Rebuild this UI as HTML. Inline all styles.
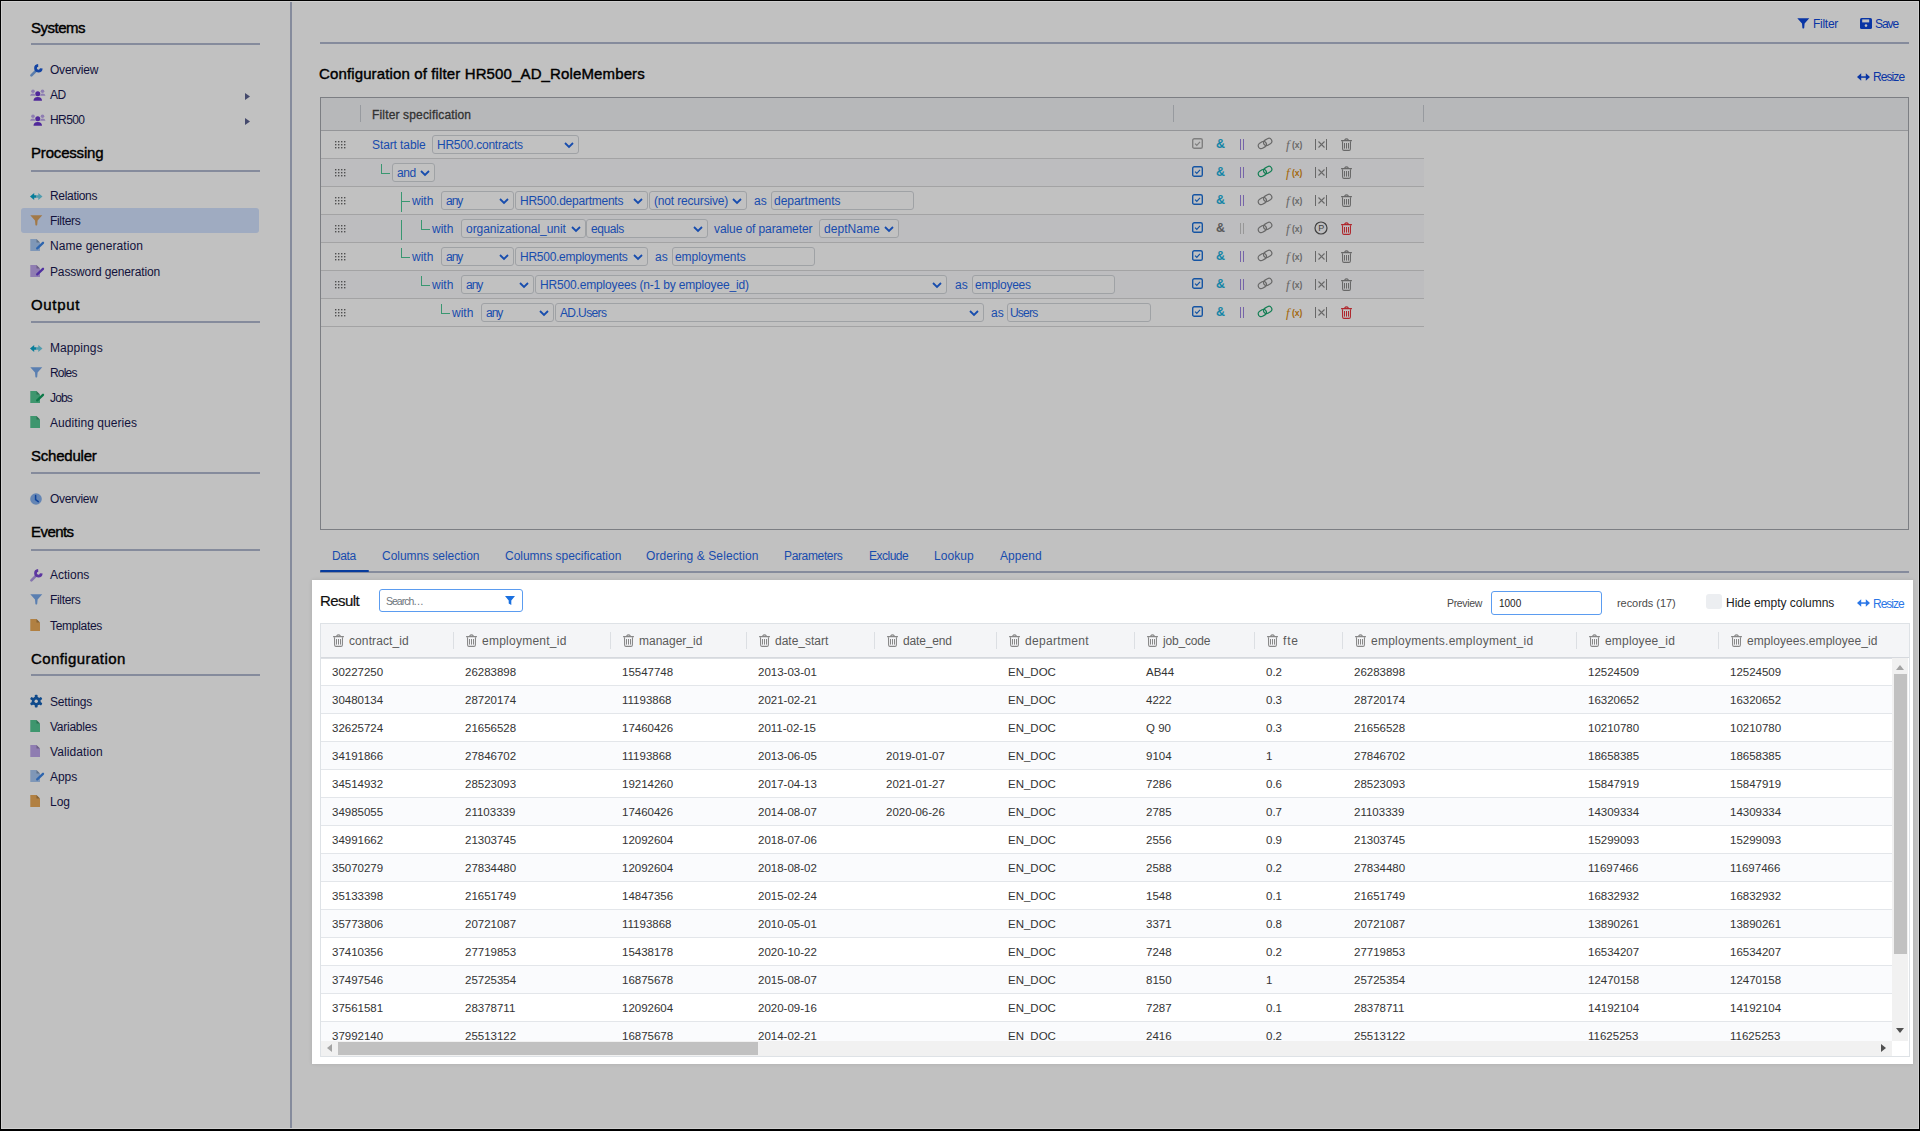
<!DOCTYPE html><html><head><meta charset="utf-8"><style>
html,body{margin:0;padding:0;width:1920px;height:1131px;overflow:hidden;background:#fff}
body{position:relative;font-family:'Liberation Sans', sans-serif}
.t{position:absolute;white-space:nowrap;line-height:1;font-family:'Liberation Sans', sans-serif}
svg{overflow:visible}
</style></head><body>
<div style="position:absolute;left:21px;top:208px;width:238px;height:25px;background:#d2e2ff;border-radius:3px"></div>
<div class="t" style="left:31px;top:20px;font-size:15px;color:#000;font-weight:normal;-webkit-text-stroke:0.4px #000;letter-spacing:-0.500px">Systems</div>
<div style="position:absolute;left:31px;top:43px;width:229px;height:2px;background:#b0b8cf"></div>
<div class="t" style="left:50px;top:64px;font-size:12px;color:#181850;font-weight:normal;;letter-spacing:-0.229px">Overview</div>
<svg style="position:absolute;left:30px;top:64px" width="13" height="13" viewBox="0 0 13 13"><path d="M1.4 11.4 L6.4 6.4" stroke="#78a6e4" stroke-width="2.6" stroke-linecap="round"/><path d="M11.3 4.4 A2.9 2.9 0 1 1 8.2 1.3" stroke="#1a5ad8" stroke-width="2.7" fill="none"/></svg>
<div class="t" style="left:50px;top:89px;font-size:12px;color:#181850;font-weight:normal;;letter-spacing:-0.400px">AD</div>
<svg style="position:absolute;left:30px;top:89px" width="16" height="13" viewBox="0 0 16 13"><circle cx="3" cy="2.2" r="1.8" fill="#bca6ec"/><circle cx="12.5" cy="2.2" r="1.8" fill="#bca6ec"/><path d="M0 6.8 Q0.5 4.6 3 4.6 Q5 4.6 5.5 6.8Z M15.5 6.8 Q15 4.6 12.5 4.6 Q10.5 4.6 10 6.8Z" fill="#bca6ec"/><circle cx="7.75" cy="4.8" r="2.5" fill="#6a36cc"/><path d="M3.5 11.8 Q3.5 8 7.75 8 Q12 8 12 11.8Z" fill="#6a36cc"/></svg>
<svg style="position:absolute;left:245px;top:93px" width="5" height="7" viewBox="0 0 5 7"><path d="M0 0 L5 3.5 L0 7Z" fill="#5c6290"/></svg>
<div class="t" style="left:50px;top:114px;font-size:12px;color:#181850;font-weight:normal;;letter-spacing:-0.600px">HR500</div>
<svg style="position:absolute;left:30px;top:114px" width="16" height="13" viewBox="0 0 16 13"><circle cx="3" cy="2.2" r="1.8" fill="#bca6ec"/><circle cx="12.5" cy="2.2" r="1.8" fill="#bca6ec"/><path d="M0 6.8 Q0.5 4.6 3 4.6 Q5 4.6 5.5 6.8Z M15.5 6.8 Q15 4.6 12.5 4.6 Q10.5 4.6 10 6.8Z" fill="#bca6ec"/><circle cx="7.75" cy="4.8" r="2.5" fill="#6a36cc"/><path d="M3.5 11.8 Q3.5 8 7.75 8 Q12 8 12 11.8Z" fill="#6a36cc"/></svg>
<svg style="position:absolute;left:245px;top:118px" width="5" height="7" viewBox="0 0 5 7"><path d="M0 0 L5 3.5 L0 7Z" fill="#5c6290"/></svg>
<div class="t" style="left:31px;top:145px;font-size:15px;color:#000;font-weight:normal;-webkit-text-stroke:0.4px #000;letter-spacing:-0.178px">Processing</div>
<div style="position:absolute;left:31px;top:170px;width:229px;height:2px;background:#b0b8cf"></div>
<div class="t" style="left:50px;top:190px;font-size:12px;color:#181850;font-weight:normal;;letter-spacing:-0.325px">Relations</div>
<svg style="position:absolute;left:30px;top:193px" width="13" height="8" viewBox="0 0 13 8"><path d="M0 3.5 L4.2 0 L4.2 2.3 L6.5 2.3 L6.5 4.7 L4.2 4.7 L4.2 7Z" fill="#0aa6cc"/><path d="M12.5 3.5 L8.3 0 L8.3 2.3 L6.5 2.3 L6.5 4.7 L8.3 4.7 L8.3 7Z" fill="#6ccfe6"/></svg>
<div class="t" style="left:50px;top:215px;font-size:12px;color:#181850;font-weight:normal;;letter-spacing:-0.333px">Filters</div>
<svg style="position:absolute;left:30px;top:215px" width="13" height="11" viewBox="0 0 13 11"><path d="M0.3 0.3 L12.3 0.3 L7.6 5.6 L7.2 10 Q6.3 11 5.4 10 L5 5.6Z" fill="#d7a060"/></svg>
<div class="t" style="left:50px;top:240px;font-size:12px;color:#181850;font-weight:normal;;letter-spacing:0.057px">Name generation</div>
<svg style="position:absolute;left:30px;top:239px" width="14" height="13" viewBox="0 0 14 13"><path d="M0.3 0 L6.5 0 L10 3.5 L10 12 L0.3 12Z" fill="#a8c8f2"/><path d="M6.5 0 L6.5 3.5 L10 3.5Z" fill="#000" opacity="0.25"/><path d="M7.2 9.4 L13 3.8" stroke="#3d86e6" stroke-width="2.3" stroke-linecap="round"/></svg>
<div class="t" style="left:50px;top:266px;font-size:12px;color:#181850;font-weight:normal;;letter-spacing:-0.144px">Password generation</div>
<svg style="position:absolute;left:30px;top:265px" width="14" height="13" viewBox="0 0 14 13"><path d="M0.3 0 L6.5 0 L10 3.5 L10 12 L0.3 12Z" fill="#bea6ea"/><path d="M6.5 0 L6.5 3.5 L10 3.5Z" fill="#000" opacity="0.25"/><path d="M7.2 9.4 L13 3.8" stroke="#6a40d4" stroke-width="2.3" stroke-linecap="round"/></svg>
<div class="t" style="left:31px;top:297px;font-size:15px;color:#000;font-weight:normal;-webkit-text-stroke:0.4px #000;letter-spacing:0.680px">Output</div>
<div style="position:absolute;left:31px;top:321px;width:229px;height:2px;background:#b0b8cf"></div>
<div class="t" style="left:50px;top:342px;font-size:12px;color:#181850;font-weight:normal;;letter-spacing:0.086px">Mappings</div>
<svg style="position:absolute;left:30px;top:345px" width="13" height="8" viewBox="0 0 13 8"><path d="M0 3.5 L4.2 0 L4.2 2.3 L6.5 2.3 L6.5 4.7 L4.2 4.7 L4.2 7Z" fill="#0aa6cc"/><path d="M12.5 3.5 L8.3 0 L8.3 2.3 L6.5 2.3 L6.5 4.7 L8.3 4.7 L8.3 7Z" fill="#6ccfe6"/></svg>
<div class="t" style="left:50px;top:367px;font-size:12px;color:#181850;font-weight:normal;;letter-spacing:-0.800px">Roles</div>
<svg style="position:absolute;left:30px;top:367px" width="13" height="11" viewBox="0 0 13 11"><path d="M0.3 0.3 L12.3 0.3 L7.6 5.6 L7.2 10 Q6.3 11 5.4 10 L5 5.6Z" fill="#78a8ea"/></svg>
<div class="t" style="left:50px;top:392px;font-size:12px;color:#181850;font-weight:normal;;letter-spacing:-0.867px">Jobs</div>
<svg style="position:absolute;left:30px;top:391px" width="14" height="13" viewBox="0 0 14 13"><path d="M0.3 0 L6.5 0 L10 3.5 L10 12 L0.3 12Z" fill="#52c692"/><path d="M6.5 0 L6.5 3.5 L10 3.5Z" fill="#000" opacity="0.25"/><path d="M7.2 9.4 L13 3.8" stroke="#12a060" stroke-width="2.3" stroke-linecap="round"/></svg>
<div class="t" style="left:50px;top:417px;font-size:12px;color:#181850;font-weight:normal;;letter-spacing:0.067px">Auditing queries</div>
<svg style="position:absolute;left:30px;top:416px" width="14" height="13" viewBox="0 0 14 13"><path d="M0.3 0 L6.5 0 L10 3.5 L10 12 L0.3 12Z" fill="#52c692"/><path d="M6.5 0 L6.5 3.5 L10 3.5Z" fill="#000" opacity="0.25"/></svg>
<div class="t" style="left:31px;top:448px;font-size:15px;color:#000;font-weight:normal;-webkit-text-stroke:0.4px #000;letter-spacing:-0.225px">Scheduler</div>
<div style="position:absolute;left:31px;top:472px;width:229px;height:2px;background:#b0b8cf"></div>
<div class="t" style="left:50px;top:493px;font-size:12px;color:#181850;font-weight:normal;;letter-spacing:-0.314px">Overview</div>
<svg style="position:absolute;left:30.299999999999997px;top:492.7px" width="12" height="12" viewBox="0 0 12 12"><circle cx="6" cy="6" r="5.8" fill="#84b0ee"/><path d="M5.6 2.4 L5.6 6.6 L8.3 8.6" stroke="#1258cc" stroke-width="1.5" fill="none" stroke-linecap="round"/></svg>
<div class="t" style="left:31px;top:524px;font-size:15px;color:#000;font-weight:normal;-webkit-text-stroke:0.4px #000;letter-spacing:-0.560px">Events</div>
<div style="position:absolute;left:31px;top:549px;width:229px;height:2px;background:#b0b8cf"></div>
<div class="t" style="left:50px;top:569px;font-size:12px;color:#181850;font-weight:normal;;letter-spacing:0.000px">Actions</div>
<svg style="position:absolute;left:30px;top:569px" width="13" height="13" viewBox="0 0 13 13"><path d="M1.4 11.4 L6.4 6.4" stroke="#b09ae6" stroke-width="2.6" stroke-linecap="round"/><path d="M11.3 4.4 A2.9 2.9 0 1 1 8.2 1.3" stroke="#7a48d4" stroke-width="2.7" fill="none"/></svg>
<div class="t" style="left:50px;top:594px;font-size:12px;color:#181850;font-weight:normal;;letter-spacing:-0.333px">Filters</div>
<svg style="position:absolute;left:30px;top:594px" width="13" height="11" viewBox="0 0 13 11"><path d="M0.3 0.3 L12.3 0.3 L7.6 5.6 L7.2 10 Q6.3 11 5.4 10 L5 5.6Z" fill="#78a8ea"/></svg>
<div class="t" style="left:50px;top:620px;font-size:12px;color:#181850;font-weight:normal;;letter-spacing:-0.300px">Templates</div>
<svg style="position:absolute;left:30px;top:619px" width="14" height="13" viewBox="0 0 14 13"><path d="M0.3 0 L6.5 0 L10 3.5 L10 12 L0.3 12Z" fill="#eaaa58"/><path d="M6.5 0 L6.5 3.5 L10 3.5Z" fill="#000" opacity="0.25"/></svg>
<div class="t" style="left:31px;top:651px;font-size:15px;color:#000;font-weight:normal;-webkit-text-stroke:0.4px #000;letter-spacing:0.417px">Configuration</div>
<div style="position:absolute;left:31px;top:674px;width:229px;height:2px;background:#b0b8cf"></div>
<div class="t" style="left:50px;top:696px;font-size:12px;color:#181850;font-weight:normal;;letter-spacing:-0.171px">Settings</div>
<svg style="position:absolute;left:30.099999999999998px;top:695.0999999999999px" width="13" height="13" viewBox="0 0 13 13"><rect x="4.8" y="-0.2" width="2.8" height="12.8" rx="0.8" fill="#1662b8" transform="rotate(0 6.2 6.2)"/><rect x="4.8" y="-0.2" width="2.8" height="12.8" rx="0.8" fill="#1662b8" transform="rotate(60 6.2 6.2)"/><rect x="4.8" y="-0.2" width="2.8" height="12.8" rx="0.8" fill="#1662b8" transform="rotate(120 6.2 6.2)"/><circle cx="6.2" cy="6.2" r="4.4" fill="#1662b8"/><circle cx="6.2" cy="6.2" r="1.7" fill="#fff"/></svg>
<div class="t" style="left:50px;top:721px;font-size:12px;color:#181850;font-weight:normal;;letter-spacing:-0.250px">Variables</div>
<svg style="position:absolute;left:30px;top:720px" width="14" height="13" viewBox="0 0 14 13"><path d="M0.3 0 L6.5 0 L10 3.5 L10 12 L0.3 12Z" fill="#52c692"/><path d="M6.5 0 L6.5 3.5 L10 3.5Z" fill="#000" opacity="0.25"/></svg>
<div class="t" style="left:50px;top:746px;font-size:12px;color:#181850;font-weight:normal;;letter-spacing:0.089px">Validation</div>
<svg style="position:absolute;left:30px;top:745px" width="14" height="13" viewBox="0 0 14 13"><path d="M0.3 0 L6.5 0 L10 3.5 L10 12 L0.3 12Z" fill="#bea6ea"/><path d="M6.5 0 L6.5 3.5 L10 3.5Z" fill="#000" opacity="0.25"/></svg>
<div class="t" style="left:50px;top:771px;font-size:12px;color:#181850;font-weight:normal;;letter-spacing:-0.067px">Apps</div>
<svg style="position:absolute;left:30px;top:770px" width="14" height="13" viewBox="0 0 14 13"><path d="M0.3 0 L6.5 0 L10 3.5 L10 12 L0.3 12Z" fill="#a8c8f2"/><path d="M6.5 0 L6.5 3.5 L10 3.5Z" fill="#000" opacity="0.25"/><path d="M7.2 9.4 L13 3.8" stroke="#3d86e6" stroke-width="2.3" stroke-linecap="round"/></svg>
<div class="t" style="left:50px;top:796px;font-size:12px;color:#181850;font-weight:normal;;letter-spacing:0.000px">Log</div>
<svg style="position:absolute;left:30px;top:795px" width="14" height="13" viewBox="0 0 14 13"><path d="M0.3 0 L6.5 0 L10 3.5 L10 12 L0.3 12Z" fill="#eaaa58"/><path d="M6.5 0 L6.5 3.5 L10 3.5Z" fill="#000" opacity="0.25"/></svg>
<div style="position:absolute;left:290px;top:0px;width:2px;height:1131px;background:#b0b8cf"></div>
<svg style="position:absolute;left:1797px;top:18px" width="13" height="11" viewBox="0 0 13 11"><path d="M0.3 0.3 L12.3 0.3 L7.6 5.6 L7.2 10 Q6.3 11 5.4 10 L5 5.6Z" fill="#0c46da"/></svg>
<div class="t" style="left:1813px;top:18px;font-size:12px;color:#0c46da;font-weight:normal;;letter-spacing:-0.280px">Filter</div>
<svg style="position:absolute;left:1860px;top:18px" width="12" height="11" viewBox="0 0 12 11"><rect x="0" y="0" width="12" height="11" rx="1.6" fill="#0c46da"/><rect x="2.2" y="1.4" width="7" height="3" fill="#fff"/><circle cx="6" cy="7.6" r="1.3" fill="#fff"/></svg>
<div class="t" style="left:1875px;top:18px;font-size:12px;color:#0c46da;font-weight:normal;;letter-spacing:-1.067px">Save</div>
<div style="position:absolute;left:320px;top:42px;width:1589px;height:2px;background:#b0b8cf"></div>
<div class="t" style="left:319px;top:66px;font-size:15px;color:#000;font-weight:normal;-webkit-text-stroke:0.4px #000;letter-spacing:0.130px">Configuration of filter HR500_AD_RoleMembers</div>
<svg style="position:absolute;left:1857px;top:73px" width="13" height="8" viewBox="0 0 13 8"><path d="M0 4 L4.2 0.2 L4.2 7.8Z M13 4 L8.8 0.2 L8.8 7.8Z" fill="#0c46da"/><rect x="3.5" y="3.3" width="6" height="1.5" fill="#0c46da"/></svg>
<div class="t" style="left:1873px;top:71px;font-size:12px;color:#0c46da;font-weight:normal;;letter-spacing:-0.920px">Resize</div>
<div style="position:absolute;left:320px;top:97px;width:1589px;height:433px;border:1px solid #a4a7ad;box-sizing:border-box;background:#fff"></div>
<div style="position:absolute;left:321px;top:98px;width:1587px;height:32px;background:#f2f3f6"></div>
<div style="position:absolute;left:321px;top:130px;width:1587px;height:1px;background:#c4c5c9"></div>
<div style="position:absolute;left:360px;top:105px;width:1px;height:17px;background:#c8ccd2"></div>
<div style="position:absolute;left:1173px;top:105px;width:1px;height:17px;background:#c8ccd2"></div>
<div style="position:absolute;left:1423px;top:105px;width:1px;height:17px;background:#c8ccd2"></div>
<div class="t" style="left:372px;top:109px;font-size:12px;color:#444;font-weight:normal;-webkit-text-stroke:0.3px #444;letter-spacing:0.158px">Filter specification</div>
<div style="position:absolute;left:321px;top:131px;width:1103px;height:27px;background:#ffffff"></div>
<div style="position:absolute;left:321px;top:158px;width:1103px;height:1px;background:#d8d8d9"></div>
<svg style="position:absolute;left:335px;top:141px" width="11" height="8" viewBox="0 0 11 8"><rect x="0" y="0" width="1.4" height="1.4" fill="#6a6a6a"/><rect x="0" y="3" width="1.4" height="1.4" fill="#6a6a6a"/><rect x="0" y="6" width="1.4" height="1.4" fill="#6a6a6a"/><rect x="3" y="0" width="1.4" height="1.4" fill="#6a6a6a"/><rect x="3" y="3" width="1.4" height="1.4" fill="#6a6a6a"/><rect x="3" y="6" width="1.4" height="1.4" fill="#6a6a6a"/><rect x="6" y="0" width="1.4" height="1.4" fill="#6a6a6a"/><rect x="6" y="3" width="1.4" height="1.4" fill="#6a6a6a"/><rect x="6" y="6" width="1.4" height="1.4" fill="#6a6a6a"/><rect x="9" y="0" width="1.4" height="1.4" fill="#6a6a6a"/><rect x="9" y="3" width="1.4" height="1.4" fill="#6a6a6a"/><rect x="9" y="6" width="1.4" height="1.4" fill="#6a6a6a"/></svg>
<div style="position:absolute;left:321px;top:159px;width:1103px;height:27px;background:#fafafd"></div>
<div style="position:absolute;left:321px;top:186px;width:1103px;height:1px;background:#d8d8d9"></div>
<svg style="position:absolute;left:335px;top:169px" width="11" height="8" viewBox="0 0 11 8"><rect x="0" y="0" width="1.4" height="1.4" fill="#6a6a6a"/><rect x="0" y="3" width="1.4" height="1.4" fill="#6a6a6a"/><rect x="0" y="6" width="1.4" height="1.4" fill="#6a6a6a"/><rect x="3" y="0" width="1.4" height="1.4" fill="#6a6a6a"/><rect x="3" y="3" width="1.4" height="1.4" fill="#6a6a6a"/><rect x="3" y="6" width="1.4" height="1.4" fill="#6a6a6a"/><rect x="6" y="0" width="1.4" height="1.4" fill="#6a6a6a"/><rect x="6" y="3" width="1.4" height="1.4" fill="#6a6a6a"/><rect x="6" y="6" width="1.4" height="1.4" fill="#6a6a6a"/><rect x="9" y="0" width="1.4" height="1.4" fill="#6a6a6a"/><rect x="9" y="3" width="1.4" height="1.4" fill="#6a6a6a"/><rect x="9" y="6" width="1.4" height="1.4" fill="#6a6a6a"/></svg>
<div style="position:absolute;left:321px;top:187px;width:1103px;height:27px;background:#ffffff"></div>
<div style="position:absolute;left:321px;top:214px;width:1103px;height:1px;background:#d8d8d9"></div>
<svg style="position:absolute;left:335px;top:197px" width="11" height="8" viewBox="0 0 11 8"><rect x="0" y="0" width="1.4" height="1.4" fill="#6a6a6a"/><rect x="0" y="3" width="1.4" height="1.4" fill="#6a6a6a"/><rect x="0" y="6" width="1.4" height="1.4" fill="#6a6a6a"/><rect x="3" y="0" width="1.4" height="1.4" fill="#6a6a6a"/><rect x="3" y="3" width="1.4" height="1.4" fill="#6a6a6a"/><rect x="3" y="6" width="1.4" height="1.4" fill="#6a6a6a"/><rect x="6" y="0" width="1.4" height="1.4" fill="#6a6a6a"/><rect x="6" y="3" width="1.4" height="1.4" fill="#6a6a6a"/><rect x="6" y="6" width="1.4" height="1.4" fill="#6a6a6a"/><rect x="9" y="0" width="1.4" height="1.4" fill="#6a6a6a"/><rect x="9" y="3" width="1.4" height="1.4" fill="#6a6a6a"/><rect x="9" y="6" width="1.4" height="1.4" fill="#6a6a6a"/></svg>
<div style="position:absolute;left:321px;top:215px;width:1103px;height:27px;background:#fafafd"></div>
<div style="position:absolute;left:321px;top:242px;width:1103px;height:1px;background:#d8d8d9"></div>
<svg style="position:absolute;left:335px;top:225px" width="11" height="8" viewBox="0 0 11 8"><rect x="0" y="0" width="1.4" height="1.4" fill="#6a6a6a"/><rect x="0" y="3" width="1.4" height="1.4" fill="#6a6a6a"/><rect x="0" y="6" width="1.4" height="1.4" fill="#6a6a6a"/><rect x="3" y="0" width="1.4" height="1.4" fill="#6a6a6a"/><rect x="3" y="3" width="1.4" height="1.4" fill="#6a6a6a"/><rect x="3" y="6" width="1.4" height="1.4" fill="#6a6a6a"/><rect x="6" y="0" width="1.4" height="1.4" fill="#6a6a6a"/><rect x="6" y="3" width="1.4" height="1.4" fill="#6a6a6a"/><rect x="6" y="6" width="1.4" height="1.4" fill="#6a6a6a"/><rect x="9" y="0" width="1.4" height="1.4" fill="#6a6a6a"/><rect x="9" y="3" width="1.4" height="1.4" fill="#6a6a6a"/><rect x="9" y="6" width="1.4" height="1.4" fill="#6a6a6a"/></svg>
<div style="position:absolute;left:321px;top:243px;width:1103px;height:27px;background:#ffffff"></div>
<div style="position:absolute;left:321px;top:270px;width:1103px;height:1px;background:#d8d8d9"></div>
<svg style="position:absolute;left:335px;top:253px" width="11" height="8" viewBox="0 0 11 8"><rect x="0" y="0" width="1.4" height="1.4" fill="#6a6a6a"/><rect x="0" y="3" width="1.4" height="1.4" fill="#6a6a6a"/><rect x="0" y="6" width="1.4" height="1.4" fill="#6a6a6a"/><rect x="3" y="0" width="1.4" height="1.4" fill="#6a6a6a"/><rect x="3" y="3" width="1.4" height="1.4" fill="#6a6a6a"/><rect x="3" y="6" width="1.4" height="1.4" fill="#6a6a6a"/><rect x="6" y="0" width="1.4" height="1.4" fill="#6a6a6a"/><rect x="6" y="3" width="1.4" height="1.4" fill="#6a6a6a"/><rect x="6" y="6" width="1.4" height="1.4" fill="#6a6a6a"/><rect x="9" y="0" width="1.4" height="1.4" fill="#6a6a6a"/><rect x="9" y="3" width="1.4" height="1.4" fill="#6a6a6a"/><rect x="9" y="6" width="1.4" height="1.4" fill="#6a6a6a"/></svg>
<div style="position:absolute;left:321px;top:271px;width:1103px;height:27px;background:#fafafd"></div>
<div style="position:absolute;left:321px;top:298px;width:1103px;height:1px;background:#d8d8d9"></div>
<svg style="position:absolute;left:335px;top:281px" width="11" height="8" viewBox="0 0 11 8"><rect x="0" y="0" width="1.4" height="1.4" fill="#6a6a6a"/><rect x="0" y="3" width="1.4" height="1.4" fill="#6a6a6a"/><rect x="0" y="6" width="1.4" height="1.4" fill="#6a6a6a"/><rect x="3" y="0" width="1.4" height="1.4" fill="#6a6a6a"/><rect x="3" y="3" width="1.4" height="1.4" fill="#6a6a6a"/><rect x="3" y="6" width="1.4" height="1.4" fill="#6a6a6a"/><rect x="6" y="0" width="1.4" height="1.4" fill="#6a6a6a"/><rect x="6" y="3" width="1.4" height="1.4" fill="#6a6a6a"/><rect x="6" y="6" width="1.4" height="1.4" fill="#6a6a6a"/><rect x="9" y="0" width="1.4" height="1.4" fill="#6a6a6a"/><rect x="9" y="3" width="1.4" height="1.4" fill="#6a6a6a"/><rect x="9" y="6" width="1.4" height="1.4" fill="#6a6a6a"/></svg>
<div style="position:absolute;left:321px;top:299px;width:1103px;height:27px;background:#ffffff"></div>
<div style="position:absolute;left:321px;top:326px;width:1103px;height:1px;background:#d8d8d9"></div>
<svg style="position:absolute;left:335px;top:309px" width="11" height="8" viewBox="0 0 11 8"><rect x="0" y="0" width="1.4" height="1.4" fill="#6a6a6a"/><rect x="0" y="3" width="1.4" height="1.4" fill="#6a6a6a"/><rect x="0" y="6" width="1.4" height="1.4" fill="#6a6a6a"/><rect x="3" y="0" width="1.4" height="1.4" fill="#6a6a6a"/><rect x="3" y="3" width="1.4" height="1.4" fill="#6a6a6a"/><rect x="3" y="6" width="1.4" height="1.4" fill="#6a6a6a"/><rect x="6" y="0" width="1.4" height="1.4" fill="#6a6a6a"/><rect x="6" y="3" width="1.4" height="1.4" fill="#6a6a6a"/><rect x="6" y="6" width="1.4" height="1.4" fill="#6a6a6a"/><rect x="9" y="0" width="1.4" height="1.4" fill="#6a6a6a"/><rect x="9" y="3" width="1.4" height="1.4" fill="#6a6a6a"/><rect x="9" y="6" width="1.4" height="1.4" fill="#6a6a6a"/></svg>
<div class="t" style="left:372px;top:139px;font-size:12px;color:#1f66e6;font-weight:normal;;letter-spacing:-0.100px">Start table</div>
<div style="position:absolute;left:432px;top:135px;width:147px;height:19px;border:1px solid #d3d6db;border-radius:3px;box-sizing:border-box;background:#fff"></div>
<div class="t" style="left:437px;top:139px;font-size:12px;color:#1f66e6;font-weight:normal;;letter-spacing:-0.243px">HR500.contracts</div>
<svg style="position:absolute;left:564px;top:142px" width="10" height="7" viewBox="0 0 10 7"><path d="M1 1 L5 5 L9 1" stroke="#1f66e6" stroke-width="1.8" fill="none"/></svg>
<div style="position:absolute;left:381px;top:164px;width:1px;height:10px;background:#4cc896"></div>
<div style="position:absolute;left:381px;top:173px;width:9px;height:1px;background:#4cc896"></div>
<div style="position:absolute;left:392px;top:163px;width:43px;height:19px;border:1px solid #d3d6db;border-radius:3px;box-sizing:border-box;background:#fff"></div>
<div class="t" style="left:397px;top:167px;font-size:12px;color:#1f66e6;font-weight:normal;;letter-spacing:-0.400px">and</div>
<svg style="position:absolute;left:420px;top:170px" width="10" height="7" viewBox="0 0 10 7"><path d="M1 1 L5 5 L9 1" stroke="#1f66e6" stroke-width="1.8" fill="none"/></svg>
<div style="position:absolute;left:401px;top:192px;width:1px;height:20px;background:#4cc896"></div>
<div style="position:absolute;left:401px;top:201px;width:9px;height:1px;background:#4cc896"></div>
<div class="t" style="left:412px;top:195px;font-size:12px;color:#1f66e6;font-weight:normal;">with</div>
<div style="position:absolute;left:441px;top:191px;width:73px;height:19px;border:1px solid #d3d6db;border-radius:3px;box-sizing:border-box;background:#fff"></div>
<div class="t" style="left:446px;top:195px;font-size:12px;color:#1f66e6;font-weight:normal;;letter-spacing:-1.000px">any</div>
<svg style="position:absolute;left:499px;top:198px" width="10" height="7" viewBox="0 0 10 7"><path d="M1 1 L5 5 L9 1" stroke="#1f66e6" stroke-width="1.8" fill="none"/></svg>
<div style="position:absolute;left:515px;top:191px;width:133px;height:19px;border:1px solid #d3d6db;border-radius:3px;box-sizing:border-box;background:#fff"></div>
<div class="t" style="left:520px;top:195px;font-size:12px;color:#1f66e6;font-weight:normal;;letter-spacing:-0.250px">HR500.departments</div>
<svg style="position:absolute;left:633px;top:198px" width="10" height="7" viewBox="0 0 10 7"><path d="M1 1 L5 5 L9 1" stroke="#1f66e6" stroke-width="1.8" fill="none"/></svg>
<div style="position:absolute;left:649px;top:191px;width:98px;height:19px;border:1px solid #d3d6db;border-radius:3px;box-sizing:border-box;background:#fff"></div>
<div class="t" style="left:654px;top:195px;font-size:12px;color:#1f66e6;font-weight:normal;;letter-spacing:-0.171px">(not recursive)</div>
<svg style="position:absolute;left:732px;top:198px" width="10" height="7" viewBox="0 0 10 7"><path d="M1 1 L5 5 L9 1" stroke="#1f66e6" stroke-width="1.8" fill="none"/></svg>
<div class="t" style="left:754px;top:195px;font-size:12px;color:#1f66e6;font-weight:normal;">as</div>
<div style="position:absolute;left:771px;top:191px;width:143px;height:19px;border:1px solid #d3d6db;border-radius:3px;box-sizing:border-box;background:#fff"></div>
<div class="t" style="left:774px;top:195px;font-size:12px;color:#1f66e6;font-weight:normal;;letter-spacing:-0.020px">departments</div>
<div style="position:absolute;left:401px;top:220px;width:1px;height:20px;background:#4cc896"></div>
<div style="position:absolute;left:421px;top:220px;width:1px;height:10px;background:#4cc896"></div>
<div style="position:absolute;left:421px;top:229px;width:9px;height:1px;background:#4cc896"></div>
<div class="t" style="left:432px;top:223px;font-size:12px;color:#1f66e6;font-weight:normal;">with</div>
<div style="position:absolute;left:461px;top:219px;width:125px;height:19px;border:1px solid #d3d6db;border-radius:3px;box-sizing:border-box;background:#fff"></div>
<div class="t" style="left:466px;top:223px;font-size:12px;color:#1f66e6;font-weight:normal;;letter-spacing:-0.044px">organizational_unit</div>
<svg style="position:absolute;left:571px;top:226px" width="10" height="7" viewBox="0 0 10 7"><path d="M1 1 L5 5 L9 1" stroke="#1f66e6" stroke-width="1.8" fill="none"/></svg>
<div style="position:absolute;left:586px;top:219px;width:122px;height:19px;border:1px solid #d3d6db;border-radius:3px;box-sizing:border-box;background:#fff"></div>
<div class="t" style="left:591px;top:223px;font-size:12px;color:#1f66e6;font-weight:normal;;letter-spacing:-0.400px">equals</div>
<svg style="position:absolute;left:693px;top:226px" width="10" height="7" viewBox="0 0 10 7"><path d="M1 1 L5 5 L9 1" stroke="#1f66e6" stroke-width="1.8" fill="none"/></svg>
<div class="t" style="left:714px;top:223px;font-size:12px;color:#1f66e6;font-weight:normal;;letter-spacing:-0.094px">value of parameter</div>
<div style="position:absolute;left:819px;top:219px;width:80px;height:19px;border:1px solid #d3d6db;border-radius:3px;box-sizing:border-box;background:#fff"></div>
<div class="t" style="left:824px;top:223px;font-size:12px;color:#1f66e6;font-weight:normal;;letter-spacing:0.057px">deptName</div>
<svg style="position:absolute;left:884px;top:226px" width="10" height="7" viewBox="0 0 10 7"><path d="M1 1 L5 5 L9 1" stroke="#1f66e6" stroke-width="1.8" fill="none"/></svg>
<div style="position:absolute;left:401px;top:248px;width:1px;height:10px;background:#4cc896"></div>
<div style="position:absolute;left:401px;top:257px;width:9px;height:1px;background:#4cc896"></div>
<div class="t" style="left:412px;top:251px;font-size:12px;color:#1f66e6;font-weight:normal;">with</div>
<div style="position:absolute;left:441px;top:247px;width:73px;height:19px;border:1px solid #d3d6db;border-radius:3px;box-sizing:border-box;background:#fff"></div>
<div class="t" style="left:446px;top:251px;font-size:12px;color:#1f66e6;font-weight:normal;;letter-spacing:-1.000px">any</div>
<svg style="position:absolute;left:499px;top:254px" width="10" height="7" viewBox="0 0 10 7"><path d="M1 1 L5 5 L9 1" stroke="#1f66e6" stroke-width="1.8" fill="none"/></svg>
<div style="position:absolute;left:515px;top:247px;width:133px;height:19px;border:1px solid #d3d6db;border-radius:3px;box-sizing:border-box;background:#fff"></div>
<div class="t" style="left:520px;top:251px;font-size:12px;color:#1f66e6;font-weight:normal;;letter-spacing:-0.263px">HR500.employments</div>
<svg style="position:absolute;left:633px;top:254px" width="10" height="7" viewBox="0 0 10 7"><path d="M1 1 L5 5 L9 1" stroke="#1f66e6" stroke-width="1.8" fill="none"/></svg>
<div class="t" style="left:655px;top:251px;font-size:12px;color:#1f66e6;font-weight:normal;">as</div>
<div style="position:absolute;left:672px;top:247px;width:143px;height:19px;border:1px solid #d3d6db;border-radius:3px;box-sizing:border-box;background:#fff"></div>
<div class="t" style="left:675px;top:251px;font-size:12px;color:#1f66e6;font-weight:normal;;letter-spacing:-0.060px">employments</div>
<div style="position:absolute;left:421px;top:276px;width:1px;height:10px;background:#4cc896"></div>
<div style="position:absolute;left:421px;top:285px;width:9px;height:1px;background:#4cc896"></div>
<div class="t" style="left:432px;top:279px;font-size:12px;color:#1f66e6;font-weight:normal;">with</div>
<div style="position:absolute;left:461px;top:275px;width:73px;height:19px;border:1px solid #d3d6db;border-radius:3px;box-sizing:border-box;background:#fff"></div>
<div class="t" style="left:466px;top:279px;font-size:12px;color:#1f66e6;font-weight:normal;;letter-spacing:-1.000px">any</div>
<svg style="position:absolute;left:519px;top:282px" width="10" height="7" viewBox="0 0 10 7"><path d="M1 1 L5 5 L9 1" stroke="#1f66e6" stroke-width="1.8" fill="none"/></svg>
<div style="position:absolute;left:535px;top:275px;width:412px;height:19px;border:1px solid #d3d6db;border-radius:3px;box-sizing:border-box;background:#fff"></div>
<div class="t" style="left:540px;top:279px;font-size:12px;color:#1f66e6;font-weight:normal;;letter-spacing:-0.166px">HR500.employees (n-1 by employee_id)</div>
<svg style="position:absolute;left:932px;top:282px" width="10" height="7" viewBox="0 0 10 7"><path d="M1 1 L5 5 L9 1" stroke="#1f66e6" stroke-width="1.8" fill="none"/></svg>
<div class="t" style="left:955px;top:279px;font-size:12px;color:#1f66e6;font-weight:normal;">as</div>
<div style="position:absolute;left:972px;top:275px;width:143px;height:19px;border:1px solid #d3d6db;border-radius:3px;box-sizing:border-box;background:#fff"></div>
<div class="t" style="left:975px;top:279px;font-size:12px;color:#1f66e6;font-weight:normal;;letter-spacing:-0.250px">employees</div>
<div style="position:absolute;left:441px;top:304px;width:1px;height:10px;background:#4cc896"></div>
<div style="position:absolute;left:441px;top:313px;width:9px;height:1px;background:#4cc896"></div>
<div class="t" style="left:452px;top:307px;font-size:12px;color:#1f66e6;font-weight:normal;">with</div>
<div style="position:absolute;left:481px;top:303px;width:73px;height:19px;border:1px solid #d3d6db;border-radius:3px;box-sizing:border-box;background:#fff"></div>
<div class="t" style="left:486px;top:307px;font-size:12px;color:#1f66e6;font-weight:normal;;letter-spacing:-1.000px">any</div>
<svg style="position:absolute;left:539px;top:310px" width="10" height="7" viewBox="0 0 10 7"><path d="M1 1 L5 5 L9 1" stroke="#1f66e6" stroke-width="1.8" fill="none"/></svg>
<div style="position:absolute;left:555px;top:303px;width:429px;height:19px;border:1px solid #d3d6db;border-radius:3px;box-sizing:border-box;background:#fff"></div>
<div class="t" style="left:560px;top:307px;font-size:12px;color:#1f66e6;font-weight:normal;;letter-spacing:-0.629px">AD.Users</div>
<svg style="position:absolute;left:969px;top:310px" width="10" height="7" viewBox="0 0 10 7"><path d="M1 1 L5 5 L9 1" stroke="#1f66e6" stroke-width="1.8" fill="none"/></svg>
<div class="t" style="left:991px;top:307px;font-size:12px;color:#1f66e6;font-weight:normal;">as</div>
<div style="position:absolute;left:1007px;top:303px;width:144px;height:19px;border:1px solid #d3d6db;border-radius:3px;box-sizing:border-box;background:#fff"></div>
<div class="t" style="left:1010px;top:307px;font-size:12px;color:#1f66e6;font-weight:normal;;letter-spacing:-0.800px">Users</div>
<svg style="position:absolute;left:1192px;top:138px" width="11" height="11" viewBox="0 0 11 11"><rect x="0.7" y="0.7" width="9.6" height="9.6" rx="1.6" fill="none" stroke="#a8a8a8" stroke-width="1.4"/><path d="M3 5.6 L4.8 7.3 L8 3.8" stroke="#a8a8a8" stroke-width="1.2" fill="none"/></svg>
<div class="t" style="left:1216px;top:138px;font-size:12.5px;color:#1cb0dc;font-weight:bold;">&amp;</div>
<div style="position:absolute;left:1239.5px;top:139px;width:1.5px;height:11px;background:#9d84e0"></div>
<div style="position:absolute;left:1242.5px;top:139px;width:1.5px;height:11px;background:#9d84e0"></div>
<svg style="position:absolute;left:1257px;top:138px" width="16" height="11" viewBox="0 0 16 11"><g transform="rotate(-30 8 5.5)"><rect x="0.6" y="2.6" width="8.6" height="5.8" rx="2.9" fill="none" stroke="#8a8a8a" stroke-width="1.2"/><rect x="6.8" y="2.6" width="8.6" height="5.8" rx="2.9" fill="none" stroke="#8a8a8a" stroke-width="1.2"/></g></svg>
<div class="t" style="left:1286px;top:138px;font-size:13px;color:#8a8a8a;font-weight:normal;font-family:Liberation Serif;font-style:italic">f</div>
<div class="t" style="left:1292px;top:141px;font-size:8.5px;color:#8a8a8a;font-weight:bold;">(x)</div>
<div style="position:absolute;left:1315px;top:139px;width:1px;height:11px;background:#8a8a8a"></div>
<div style="position:absolute;left:1326px;top:139px;width:1px;height:11px;background:#8a8a8a"></div>
<svg style="position:absolute;left:1317.5px;top:141px" width="7" height="7" viewBox="0 0 7 7"><path d="M0.5 0.5 L6.5 6.5 M6.5 0.5 L0.5 6.5" stroke="#8a8a8a" stroke-width="1.1"/></svg>
<svg style="position:absolute;left:1341px;top:138px" width="11" height="13" viewBox="0 0 11 13"><path d="M3.5 2 Q5.5 -0.3 7.5 2" fill="none" stroke="#8a8a8a" stroke-width="1.1"/><rect x="0" y="2" width="11" height="1.3" rx="0.5" fill="#8a8a8a"/><path d="M1.5 3.3 L1.6 11 Q1.7 12.4 3 12.4 L8 12.4 Q9.3 12.4 9.4 11 L9.5 3.3" fill="none" stroke="#8a8a8a" stroke-width="1.1"/><path d="M3.5 5 L3.5 10.6 M5.5 5 L5.5 10.6 M7.5 5 L7.5 10.6" stroke="#8a8a8a" stroke-width="1"/></svg>
<svg style="position:absolute;left:1192px;top:166px" width="11" height="11" viewBox="0 0 11 11"><rect x="0.7" y="0.7" width="9.6" height="9.6" rx="1.6" fill="none" stroke="#1c70d8" stroke-width="1.4"/><path d="M3 5.6 L4.8 7.3 L8 3.8" stroke="#1c70d8" stroke-width="1.2" fill="none"/></svg>
<div class="t" style="left:1216px;top:166px;font-size:12.5px;color:#1cb0dc;font-weight:bold;">&amp;</div>
<div style="position:absolute;left:1239.5px;top:167px;width:1.5px;height:11px;background:#9d84e0"></div>
<div style="position:absolute;left:1242.5px;top:167px;width:1.5px;height:11px;background:#9d84e0"></div>
<svg style="position:absolute;left:1257px;top:166px" width="16" height="11" viewBox="0 0 16 11"><g transform="rotate(-30 8 5.5)"><rect x="0.6" y="2.6" width="8.6" height="5.8" rx="2.9" fill="none" stroke="#1aa870" stroke-width="1.2"/><rect x="6.8" y="2.6" width="8.6" height="5.8" rx="2.9" fill="none" stroke="#1aa870" stroke-width="1.2"/></g></svg>
<div class="t" style="left:1286px;top:166px;font-size:13px;color:#d88a10;font-weight:normal;font-family:Liberation Serif;font-style:italic">f</div>
<div class="t" style="left:1292px;top:169px;font-size:8.5px;color:#d88a10;font-weight:bold;">(x)</div>
<div style="position:absolute;left:1315px;top:167px;width:1px;height:11px;background:#8a8a8a"></div>
<div style="position:absolute;left:1326px;top:167px;width:1px;height:11px;background:#8a8a8a"></div>
<svg style="position:absolute;left:1317.5px;top:169px" width="7" height="7" viewBox="0 0 7 7"><path d="M0.5 0.5 L6.5 6.5 M6.5 0.5 L0.5 6.5" stroke="#8a8a8a" stroke-width="1.1"/></svg>
<svg style="position:absolute;left:1341px;top:166px" width="11" height="13" viewBox="0 0 11 13"><path d="M3.5 2 Q5.5 -0.3 7.5 2" fill="none" stroke="#8a8a8a" stroke-width="1.1"/><rect x="0" y="2" width="11" height="1.3" rx="0.5" fill="#8a8a8a"/><path d="M1.5 3.3 L1.6 11 Q1.7 12.4 3 12.4 L8 12.4 Q9.3 12.4 9.4 11 L9.5 3.3" fill="none" stroke="#8a8a8a" stroke-width="1.1"/><path d="M3.5 5 L3.5 10.6 M5.5 5 L5.5 10.6 M7.5 5 L7.5 10.6" stroke="#8a8a8a" stroke-width="1"/></svg>
<svg style="position:absolute;left:1192px;top:194px" width="11" height="11" viewBox="0 0 11 11"><rect x="0.7" y="0.7" width="9.6" height="9.6" rx="1.6" fill="none" stroke="#1c70d8" stroke-width="1.4"/><path d="M3 5.6 L4.8 7.3 L8 3.8" stroke="#1c70d8" stroke-width="1.2" fill="none"/></svg>
<div class="t" style="left:1216px;top:194px;font-size:12.5px;color:#1cb0dc;font-weight:bold;">&amp;</div>
<div style="position:absolute;left:1239.5px;top:195px;width:1.5px;height:11px;background:#9d84e0"></div>
<div style="position:absolute;left:1242.5px;top:195px;width:1.5px;height:11px;background:#9d84e0"></div>
<svg style="position:absolute;left:1257px;top:194px" width="16" height="11" viewBox="0 0 16 11"><g transform="rotate(-30 8 5.5)"><rect x="0.6" y="2.6" width="8.6" height="5.8" rx="2.9" fill="none" stroke="#8a8a8a" stroke-width="1.2"/><rect x="6.8" y="2.6" width="8.6" height="5.8" rx="2.9" fill="none" stroke="#8a8a8a" stroke-width="1.2"/></g></svg>
<div class="t" style="left:1286px;top:194px;font-size:13px;color:#8a8a8a;font-weight:normal;font-family:Liberation Serif;font-style:italic">f</div>
<div class="t" style="left:1292px;top:197px;font-size:8.5px;color:#8a8a8a;font-weight:bold;">(x)</div>
<div style="position:absolute;left:1315px;top:195px;width:1px;height:11px;background:#8a8a8a"></div>
<div style="position:absolute;left:1326px;top:195px;width:1px;height:11px;background:#8a8a8a"></div>
<svg style="position:absolute;left:1317.5px;top:197px" width="7" height="7" viewBox="0 0 7 7"><path d="M0.5 0.5 L6.5 6.5 M6.5 0.5 L0.5 6.5" stroke="#8a8a8a" stroke-width="1.1"/></svg>
<svg style="position:absolute;left:1341px;top:194px" width="11" height="13" viewBox="0 0 11 13"><path d="M3.5 2 Q5.5 -0.3 7.5 2" fill="none" stroke="#8a8a8a" stroke-width="1.1"/><rect x="0" y="2" width="11" height="1.3" rx="0.5" fill="#8a8a8a"/><path d="M1.5 3.3 L1.6 11 Q1.7 12.4 3 12.4 L8 12.4 Q9.3 12.4 9.4 11 L9.5 3.3" fill="none" stroke="#8a8a8a" stroke-width="1.1"/><path d="M3.5 5 L3.5 10.6 M5.5 5 L5.5 10.6 M7.5 5 L7.5 10.6" stroke="#8a8a8a" stroke-width="1"/></svg>
<svg style="position:absolute;left:1192px;top:222px" width="11" height="11" viewBox="0 0 11 11"><rect x="0.7" y="0.7" width="9.6" height="9.6" rx="1.6" fill="none" stroke="#1c70d8" stroke-width="1.4"/><path d="M3 5.6 L4.8 7.3 L8 3.8" stroke="#1c70d8" stroke-width="1.2" fill="none"/></svg>
<div class="t" style="left:1216px;top:222px;font-size:12.5px;color:#777;font-weight:bold;">&amp;</div>
<div style="position:absolute;left:1239.5px;top:223px;width:1.5px;height:11px;background:#c8c8c8"></div>
<div style="position:absolute;left:1242.5px;top:223px;width:1.5px;height:11px;background:#c8c8c8"></div>
<svg style="position:absolute;left:1257px;top:222px" width="16" height="11" viewBox="0 0 16 11"><g transform="rotate(-30 8 5.5)"><rect x="0.6" y="2.6" width="8.6" height="5.8" rx="2.9" fill="none" stroke="#8a8a8a" stroke-width="1.2"/><rect x="6.8" y="2.6" width="8.6" height="5.8" rx="2.9" fill="none" stroke="#8a8a8a" stroke-width="1.2"/></g></svg>
<div class="t" style="left:1286px;top:222px;font-size:13px;color:#8a8a8a;font-weight:normal;font-family:Liberation Serif;font-style:italic">f</div>
<div class="t" style="left:1292px;top:225px;font-size:8.5px;color:#8a8a8a;font-weight:bold;">(x)</div>
<svg style="position:absolute;left:1314px;top:221px" width="14" height="14" viewBox="0 0 14 14"><circle cx="7" cy="7" r="6" fill="none" stroke="#555" stroke-width="1.2"/><text x="4.3" y="10.3" font-size="9" font-family="Liberation Sans" fill="#555">P</text></svg>
<svg style="position:absolute;left:1341px;top:222px" width="11" height="13" viewBox="0 0 11 13"><path d="M3.5 2 Q5.5 -0.3 7.5 2" fill="none" stroke="#e8343c" stroke-width="1.1"/><rect x="0" y="2" width="11" height="1.3" rx="0.5" fill="#e8343c"/><path d="M1.5 3.3 L1.6 11 Q1.7 12.4 3 12.4 L8 12.4 Q9.3 12.4 9.4 11 L9.5 3.3" fill="none" stroke="#e8343c" stroke-width="1.1"/><path d="M3.5 5 L3.5 10.6 M5.5 5 L5.5 10.6 M7.5 5 L7.5 10.6" stroke="#e8343c" stroke-width="1"/></svg>
<svg style="position:absolute;left:1192px;top:250px" width="11" height="11" viewBox="0 0 11 11"><rect x="0.7" y="0.7" width="9.6" height="9.6" rx="1.6" fill="none" stroke="#1c70d8" stroke-width="1.4"/><path d="M3 5.6 L4.8 7.3 L8 3.8" stroke="#1c70d8" stroke-width="1.2" fill="none"/></svg>
<div class="t" style="left:1216px;top:250px;font-size:12.5px;color:#1cb0dc;font-weight:bold;">&amp;</div>
<div style="position:absolute;left:1239.5px;top:251px;width:1.5px;height:11px;background:#9d84e0"></div>
<div style="position:absolute;left:1242.5px;top:251px;width:1.5px;height:11px;background:#9d84e0"></div>
<svg style="position:absolute;left:1257px;top:250px" width="16" height="11" viewBox="0 0 16 11"><g transform="rotate(-30 8 5.5)"><rect x="0.6" y="2.6" width="8.6" height="5.8" rx="2.9" fill="none" stroke="#8a8a8a" stroke-width="1.2"/><rect x="6.8" y="2.6" width="8.6" height="5.8" rx="2.9" fill="none" stroke="#8a8a8a" stroke-width="1.2"/></g></svg>
<div class="t" style="left:1286px;top:250px;font-size:13px;color:#8a8a8a;font-weight:normal;font-family:Liberation Serif;font-style:italic">f</div>
<div class="t" style="left:1292px;top:253px;font-size:8.5px;color:#8a8a8a;font-weight:bold;">(x)</div>
<div style="position:absolute;left:1315px;top:251px;width:1px;height:11px;background:#8a8a8a"></div>
<div style="position:absolute;left:1326px;top:251px;width:1px;height:11px;background:#8a8a8a"></div>
<svg style="position:absolute;left:1317.5px;top:253px" width="7" height="7" viewBox="0 0 7 7"><path d="M0.5 0.5 L6.5 6.5 M6.5 0.5 L0.5 6.5" stroke="#8a8a8a" stroke-width="1.1"/></svg>
<svg style="position:absolute;left:1341px;top:250px" width="11" height="13" viewBox="0 0 11 13"><path d="M3.5 2 Q5.5 -0.3 7.5 2" fill="none" stroke="#8a8a8a" stroke-width="1.1"/><rect x="0" y="2" width="11" height="1.3" rx="0.5" fill="#8a8a8a"/><path d="M1.5 3.3 L1.6 11 Q1.7 12.4 3 12.4 L8 12.4 Q9.3 12.4 9.4 11 L9.5 3.3" fill="none" stroke="#8a8a8a" stroke-width="1.1"/><path d="M3.5 5 L3.5 10.6 M5.5 5 L5.5 10.6 M7.5 5 L7.5 10.6" stroke="#8a8a8a" stroke-width="1"/></svg>
<svg style="position:absolute;left:1192px;top:278px" width="11" height="11" viewBox="0 0 11 11"><rect x="0.7" y="0.7" width="9.6" height="9.6" rx="1.6" fill="none" stroke="#1c70d8" stroke-width="1.4"/><path d="M3 5.6 L4.8 7.3 L8 3.8" stroke="#1c70d8" stroke-width="1.2" fill="none"/></svg>
<div class="t" style="left:1216px;top:278px;font-size:12.5px;color:#1cb0dc;font-weight:bold;">&amp;</div>
<div style="position:absolute;left:1239.5px;top:279px;width:1.5px;height:11px;background:#9d84e0"></div>
<div style="position:absolute;left:1242.5px;top:279px;width:1.5px;height:11px;background:#9d84e0"></div>
<svg style="position:absolute;left:1257px;top:278px" width="16" height="11" viewBox="0 0 16 11"><g transform="rotate(-30 8 5.5)"><rect x="0.6" y="2.6" width="8.6" height="5.8" rx="2.9" fill="none" stroke="#8a8a8a" stroke-width="1.2"/><rect x="6.8" y="2.6" width="8.6" height="5.8" rx="2.9" fill="none" stroke="#8a8a8a" stroke-width="1.2"/></g></svg>
<div class="t" style="left:1286px;top:278px;font-size:13px;color:#8a8a8a;font-weight:normal;font-family:Liberation Serif;font-style:italic">f</div>
<div class="t" style="left:1292px;top:281px;font-size:8.5px;color:#8a8a8a;font-weight:bold;">(x)</div>
<div style="position:absolute;left:1315px;top:279px;width:1px;height:11px;background:#8a8a8a"></div>
<div style="position:absolute;left:1326px;top:279px;width:1px;height:11px;background:#8a8a8a"></div>
<svg style="position:absolute;left:1317.5px;top:281px" width="7" height="7" viewBox="0 0 7 7"><path d="M0.5 0.5 L6.5 6.5 M6.5 0.5 L0.5 6.5" stroke="#8a8a8a" stroke-width="1.1"/></svg>
<svg style="position:absolute;left:1341px;top:278px" width="11" height="13" viewBox="0 0 11 13"><path d="M3.5 2 Q5.5 -0.3 7.5 2" fill="none" stroke="#8a8a8a" stroke-width="1.1"/><rect x="0" y="2" width="11" height="1.3" rx="0.5" fill="#8a8a8a"/><path d="M1.5 3.3 L1.6 11 Q1.7 12.4 3 12.4 L8 12.4 Q9.3 12.4 9.4 11 L9.5 3.3" fill="none" stroke="#8a8a8a" stroke-width="1.1"/><path d="M3.5 5 L3.5 10.6 M5.5 5 L5.5 10.6 M7.5 5 L7.5 10.6" stroke="#8a8a8a" stroke-width="1"/></svg>
<svg style="position:absolute;left:1192px;top:306px" width="11" height="11" viewBox="0 0 11 11"><rect x="0.7" y="0.7" width="9.6" height="9.6" rx="1.6" fill="none" stroke="#1c70d8" stroke-width="1.4"/><path d="M3 5.6 L4.8 7.3 L8 3.8" stroke="#1c70d8" stroke-width="1.2" fill="none"/></svg>
<div class="t" style="left:1216px;top:306px;font-size:12.5px;color:#1cb0dc;font-weight:bold;">&amp;</div>
<div style="position:absolute;left:1239.5px;top:307px;width:1.5px;height:11px;background:#9d84e0"></div>
<div style="position:absolute;left:1242.5px;top:307px;width:1.5px;height:11px;background:#9d84e0"></div>
<svg style="position:absolute;left:1257px;top:306px" width="16" height="11" viewBox="0 0 16 11"><g transform="rotate(-30 8 5.5)"><rect x="0.6" y="2.6" width="8.6" height="5.8" rx="2.9" fill="none" stroke="#1aa870" stroke-width="1.2"/><rect x="6.8" y="2.6" width="8.6" height="5.8" rx="2.9" fill="none" stroke="#1aa870" stroke-width="1.2"/></g></svg>
<div class="t" style="left:1286px;top:306px;font-size:13px;color:#d88a10;font-weight:normal;font-family:Liberation Serif;font-style:italic">f</div>
<div class="t" style="left:1292px;top:309px;font-size:8.5px;color:#d88a10;font-weight:bold;">(x)</div>
<div style="position:absolute;left:1315px;top:307px;width:1px;height:11px;background:#8a8a8a"></div>
<div style="position:absolute;left:1326px;top:307px;width:1px;height:11px;background:#8a8a8a"></div>
<svg style="position:absolute;left:1317.5px;top:309px" width="7" height="7" viewBox="0 0 7 7"><path d="M0.5 0.5 L6.5 6.5 M6.5 0.5 L0.5 6.5" stroke="#8a8a8a" stroke-width="1.1"/></svg>
<svg style="position:absolute;left:1341px;top:306px" width="11" height="13" viewBox="0 0 11 13"><path d="M3.5 2 Q5.5 -0.3 7.5 2" fill="none" stroke="#e8343c" stroke-width="1.1"/><rect x="0" y="2" width="11" height="1.3" rx="0.5" fill="#e8343c"/><path d="M1.5 3.3 L1.6 11 Q1.7 12.4 3 12.4 L8 12.4 Q9.3 12.4 9.4 11 L9.5 3.3" fill="none" stroke="#e8343c" stroke-width="1.1"/><path d="M3.5 5 L3.5 10.6 M5.5 5 L5.5 10.6 M7.5 5 L7.5 10.6" stroke="#e8343c" stroke-width="1"/></svg>
<div style="position:absolute;left:320px;top:571px;width:1589px;height:2px;background:#b0b8cf"></div>
<div style="position:absolute;left:320px;top:570px;width:49px;height:2px;background:#0a4fd0;border-radius:1px"></div>
<div class="t" style="left:332px;top:550px;font-size:12px;color:#1f66e6;font-weight:normal;;letter-spacing:-0.400px">Data</div>
<div class="t" style="left:382px;top:550px;font-size:12px;color:#1f66e6;font-weight:normal;;letter-spacing:-0.038px">Columns selection</div>
<div class="t" style="left:505px;top:550px;font-size:12px;color:#1f66e6;font-weight:normal;;letter-spacing:-0.020px">Columns specification</div>
<div class="t" style="left:646px;top:550px;font-size:12px;color:#1f66e6;font-weight:normal;;letter-spacing:0.084px">Ordering &amp; Selection</div>
<div class="t" style="left:784px;top:550px;font-size:12px;color:#1f66e6;font-weight:normal;;letter-spacing:-0.356px">Parameters</div>
<div class="t" style="left:869px;top:550px;font-size:12px;color:#1f66e6;font-weight:normal;;letter-spacing:-0.500px">Exclude</div>
<div class="t" style="left:934px;top:550px;font-size:12px;color:#1f66e6;font-weight:normal;;letter-spacing:0.080px">Lookup</div>
<div class="t" style="left:1000px;top:550px;font-size:12px;color:#1f66e6;font-weight:normal;;letter-spacing:0.080px">Append</div>
<div style="position:absolute;left:0;top:0;width:1920px;height:1131px;background:rgba(0,0,0,0.245);z-index:10"></div>
<div id="rp" style="position:absolute;left:0;top:0;width:1920px;height:1131px;z-index:20;pointer-events:none">
<div style="position:absolute;left:312px;top:580px;width:1601px;height:484px;background:#fff;box-shadow:0 0 4px rgba(0,0,0,0.10)"></div>
<div class="t" style="left:320px;top:593px;font-size:15px;color:#111;font-weight:normal;-webkit-text-stroke:0.2px #111;letter-spacing:-0.560px">Result</div>
<div style="position:absolute;left:379px;top:589px;width:144px;height:23px;border:1px solid #5b9cf0;border-radius:3px;box-sizing:border-box;background:#fff"></div>
<div class="t" style="left:386px;top:596px;font-size:10.5px;color:#6c757d;font-weight:normal;;letter-spacing:-1.000px">Search…</div>
<svg style="position:absolute;left:505px;top:596px" width="10" height="9" viewBox="0 0 10 9"><path d="M0 0 L10 0 L6.3 4.5 L6.3 9 L3.7 7.5 L3.7 4.5Z" fill="#1a70e0"/></svg>
<div class="t" style="left:1447px;top:598px;font-size:10.5px;color:#4a4a4a;font-weight:normal;;letter-spacing:-0.333px">Preview</div>
<div style="position:absolute;left:1491px;top:591px;width:111px;height:24px;border:1px solid #5b9cf0;border-radius:3px;box-sizing:border-box;background:#fff"></div>
<div class="t" style="left:1499px;top:599px;font-size:10px;color:#222;font-weight:normal;">1000</div>
<div class="t" style="left:1617px;top:598px;font-size:11px;color:#4a4a4a;font-weight:normal;;letter-spacing:-0.055px">records (17)</div>
<div style="position:absolute;left:1706px;top:594px;width:16px;height:15px;background:#eceef1;border-radius:3px"></div>
<div class="t" style="left:1726px;top:597px;font-size:12px;color:#222;font-weight:normal;;letter-spacing:-0.024px">Hide empty columns</div>
<svg style="position:absolute;left:1857px;top:599px" width="13" height="8" viewBox="0 0 13 8"><path d="M0 4 L4.2 0.2 L4.2 7.8Z M13 4 L8.8 0.2 L8.8 7.8Z" fill="#2a76e6"/><rect x="3.5" y="3.3" width="6" height="1.5" fill="#2a76e6"/></svg>
<div class="t" style="left:1873px;top:598px;font-size:12px;color:#2a76e6;font-weight:normal;;letter-spacing:-1.000px">Resize</div>
<div style="position:absolute;left:320px;top:623px;width:1590px;height:434px;border:1px solid #dee2e6;box-sizing:border-box;background:#fff"></div>
<div style="position:absolute;left:321px;top:624px;width:1588px;height:33px;background:#f4f5f7"></div>
<div style="position:absolute;left:321px;top:657px;width:1588px;height:1px;background:#d6d9de"></div>
<svg style="position:absolute;left:333px;top:634px" width="11" height="13" viewBox="0 0 11 13"><path d="M3.5 2 Q5.5 -0.3 7.5 2" fill="none" stroke="#888" stroke-width="1.1"/><rect x="0" y="2" width="11" height="1.3" rx="0.5" fill="#888"/><path d="M1.5 3.3 L1.6 11 Q1.7 12.4 3 12.4 L8 12.4 Q9.3 12.4 9.4 11 L9.5 3.3" fill="none" stroke="#888" stroke-width="1.1"/><path d="M3.5 5 L3.5 10.6 M5.5 5 L5.5 10.6 M7.5 5 L7.5 10.6" stroke="#888" stroke-width="1"/></svg>
<div class="t" style="left:349px;top:635px;font-size:12px;color:#5a5a5a;font-weight:normal;;letter-spacing:0.100px">contract_id</div>
<div style="position:absolute;left:453px;top:632px;width:1px;height:17px;background:#dcdfe3"></div>
<svg style="position:absolute;left:466px;top:634px" width="11" height="13" viewBox="0 0 11 13"><path d="M3.5 2 Q5.5 -0.3 7.5 2" fill="none" stroke="#888" stroke-width="1.1"/><rect x="0" y="2" width="11" height="1.3" rx="0.5" fill="#888"/><path d="M1.5 3.3 L1.6 11 Q1.7 12.4 3 12.4 L8 12.4 Q9.3 12.4 9.4 11 L9.5 3.3" fill="none" stroke="#888" stroke-width="1.1"/><path d="M3.5 5 L3.5 10.6 M5.5 5 L5.5 10.6 M7.5 5 L7.5 10.6" stroke="#888" stroke-width="1"/></svg>
<div class="t" style="left:482px;top:635px;font-size:12px;color:#5a5a5a;font-weight:normal;;letter-spacing:0.250px">employment_id</div>
<div style="position:absolute;left:610px;top:632px;width:1px;height:17px;background:#dcdfe3"></div>
<svg style="position:absolute;left:623px;top:634px" width="11" height="13" viewBox="0 0 11 13"><path d="M3.5 2 Q5.5 -0.3 7.5 2" fill="none" stroke="#888" stroke-width="1.1"/><rect x="0" y="2" width="11" height="1.3" rx="0.5" fill="#888"/><path d="M1.5 3.3 L1.6 11 Q1.7 12.4 3 12.4 L8 12.4 Q9.3 12.4 9.4 11 L9.5 3.3" fill="none" stroke="#888" stroke-width="1.1"/><path d="M3.5 5 L3.5 10.6 M5.5 5 L5.5 10.6 M7.5 5 L7.5 10.6" stroke="#888" stroke-width="1"/></svg>
<div class="t" style="left:639px;top:635px;font-size:12px;color:#5a5a5a;font-weight:normal;;letter-spacing:0.000px">manager_id</div>
<div style="position:absolute;left:746px;top:632px;width:1px;height:17px;background:#dcdfe3"></div>
<svg style="position:absolute;left:759px;top:634px" width="11" height="13" viewBox="0 0 11 13"><path d="M3.5 2 Q5.5 -0.3 7.5 2" fill="none" stroke="#888" stroke-width="1.1"/><rect x="0" y="2" width="11" height="1.3" rx="0.5" fill="#888"/><path d="M1.5 3.3 L1.6 11 Q1.7 12.4 3 12.4 L8 12.4 Q9.3 12.4 9.4 11 L9.5 3.3" fill="none" stroke="#888" stroke-width="1.1"/><path d="M3.5 5 L3.5 10.6 M5.5 5 L5.5 10.6 M7.5 5 L7.5 10.6" stroke="#888" stroke-width="1"/></svg>
<div class="t" style="left:775px;top:635px;font-size:12px;color:#5a5a5a;font-weight:normal;;letter-spacing:0.000px">date_start</div>
<div style="position:absolute;left:874px;top:632px;width:1px;height:17px;background:#dcdfe3"></div>
<svg style="position:absolute;left:887px;top:634px" width="11" height="13" viewBox="0 0 11 13"><path d="M3.5 2 Q5.5 -0.3 7.5 2" fill="none" stroke="#888" stroke-width="1.1"/><rect x="0" y="2" width="11" height="1.3" rx="0.5" fill="#888"/><path d="M1.5 3.3 L1.6 11 Q1.7 12.4 3 12.4 L8 12.4 Q9.3 12.4 9.4 11 L9.5 3.3" fill="none" stroke="#888" stroke-width="1.1"/><path d="M3.5 5 L3.5 10.6 M5.5 5 L5.5 10.6 M7.5 5 L7.5 10.6" stroke="#888" stroke-width="1"/></svg>
<div class="t" style="left:903px;top:635px;font-size:12px;color:#5a5a5a;font-weight:normal;;letter-spacing:-0.171px">date_end</div>
<div style="position:absolute;left:996px;top:632px;width:1px;height:17px;background:#dcdfe3"></div>
<svg style="position:absolute;left:1009px;top:634px" width="11" height="13" viewBox="0 0 11 13"><path d="M3.5 2 Q5.5 -0.3 7.5 2" fill="none" stroke="#888" stroke-width="1.1"/><rect x="0" y="2" width="11" height="1.3" rx="0.5" fill="#888"/><path d="M1.5 3.3 L1.6 11 Q1.7 12.4 3 12.4 L8 12.4 Q9.3 12.4 9.4 11 L9.5 3.3" fill="none" stroke="#888" stroke-width="1.1"/><path d="M3.5 5 L3.5 10.6 M5.5 5 L5.5 10.6 M7.5 5 L7.5 10.6" stroke="#888" stroke-width="1"/></svg>
<div class="t" style="left:1025px;top:635px;font-size:12px;color:#5a5a5a;font-weight:normal;;letter-spacing:0.333px">department</div>
<div style="position:absolute;left:1134px;top:632px;width:1px;height:17px;background:#dcdfe3"></div>
<svg style="position:absolute;left:1147px;top:634px" width="11" height="13" viewBox="0 0 11 13"><path d="M3.5 2 Q5.5 -0.3 7.5 2" fill="none" stroke="#888" stroke-width="1.1"/><rect x="0" y="2" width="11" height="1.3" rx="0.5" fill="#888"/><path d="M1.5 3.3 L1.6 11 Q1.7 12.4 3 12.4 L8 12.4 Q9.3 12.4 9.4 11 L9.5 3.3" fill="none" stroke="#888" stroke-width="1.1"/><path d="M3.5 5 L3.5 10.6 M5.5 5 L5.5 10.6 M7.5 5 L7.5 10.6" stroke="#888" stroke-width="1"/></svg>
<div class="t" style="left:1163px;top:635px;font-size:12px;color:#5a5a5a;font-weight:normal;;letter-spacing:-0.171px">job_code</div>
<div style="position:absolute;left:1254px;top:632px;width:1px;height:17px;background:#dcdfe3"></div>
<svg style="position:absolute;left:1267px;top:634px" width="11" height="13" viewBox="0 0 11 13"><path d="M3.5 2 Q5.5 -0.3 7.5 2" fill="none" stroke="#888" stroke-width="1.1"/><rect x="0" y="2" width="11" height="1.3" rx="0.5" fill="#888"/><path d="M1.5 3.3 L1.6 11 Q1.7 12.4 3 12.4 L8 12.4 Q9.3 12.4 9.4 11 L9.5 3.3" fill="none" stroke="#888" stroke-width="1.1"/><path d="M3.5 5 L3.5 10.6 M5.5 5 L5.5 10.6 M7.5 5 L7.5 10.6" stroke="#888" stroke-width="1"/></svg>
<div class="t" style="left:1283px;top:635px;font-size:12px;color:#5a5a5a;font-weight:normal;;letter-spacing:0.800px">fte</div>
<div style="position:absolute;left:1342px;top:632px;width:1px;height:17px;background:#dcdfe3"></div>
<svg style="position:absolute;left:1355px;top:634px" width="11" height="13" viewBox="0 0 11 13"><path d="M3.5 2 Q5.5 -0.3 7.5 2" fill="none" stroke="#888" stroke-width="1.1"/><rect x="0" y="2" width="11" height="1.3" rx="0.5" fill="#888"/><path d="M1.5 3.3 L1.6 11 Q1.7 12.4 3 12.4 L8 12.4 Q9.3 12.4 9.4 11 L9.5 3.3" fill="none" stroke="#888" stroke-width="1.1"/><path d="M3.5 5 L3.5 10.6 M5.5 5 L5.5 10.6 M7.5 5 L7.5 10.6" stroke="#888" stroke-width="1"/></svg>
<div class="t" style="left:1371px;top:635px;font-size:12px;color:#5a5a5a;font-weight:normal;;letter-spacing:0.250px">employments.employment_id</div>
<div style="position:absolute;left:1576px;top:632px;width:1px;height:17px;background:#dcdfe3"></div>
<svg style="position:absolute;left:1589px;top:634px" width="11" height="13" viewBox="0 0 11 13"><path d="M3.5 2 Q5.5 -0.3 7.5 2" fill="none" stroke="#888" stroke-width="1.1"/><rect x="0" y="2" width="11" height="1.3" rx="0.5" fill="#888"/><path d="M1.5 3.3 L1.6 11 Q1.7 12.4 3 12.4 L8 12.4 Q9.3 12.4 9.4 11 L9.5 3.3" fill="none" stroke="#888" stroke-width="1.1"/><path d="M3.5 5 L3.5 10.6 M5.5 5 L5.5 10.6 M7.5 5 L7.5 10.6" stroke="#888" stroke-width="1"/></svg>
<div class="t" style="left:1605px;top:635px;font-size:12px;color:#5a5a5a;font-weight:normal;;letter-spacing:0.180px">employee_id</div>
<div style="position:absolute;left:1718px;top:632px;width:1px;height:17px;background:#dcdfe3"></div>
<svg style="position:absolute;left:1731px;top:634px" width="11" height="13" viewBox="0 0 11 13"><path d="M3.5 2 Q5.5 -0.3 7.5 2" fill="none" stroke="#888" stroke-width="1.1"/><rect x="0" y="2" width="11" height="1.3" rx="0.5" fill="#888"/><path d="M1.5 3.3 L1.6 11 Q1.7 12.4 3 12.4 L8 12.4 Q9.3 12.4 9.4 11 L9.5 3.3" fill="none" stroke="#888" stroke-width="1.1"/><path d="M3.5 5 L3.5 10.6 M5.5 5 L5.5 10.6 M7.5 5 L7.5 10.6" stroke="#888" stroke-width="1"/></svg>
<div class="t" style="left:1747px;top:635px;font-size:12px;color:#5a5a5a;font-weight:normal;;letter-spacing:0.050px">employees.employee_id</div>
<div style="position:absolute;left:321px;top:658px;width:1572px;height:383px;overflow:hidden">
<div style="position:absolute;left:0px;top:0px;width:1572px;height:27px;background:#ffffff"></div>
<div style="position:absolute;left:0px;top:27px;width:1572px;height:1px;background:#e3e6ea"></div>
<div class="t" style="left:11px;top:9px;font-size:11.5px;color:#333;font-weight:normal;">30227250</div>
<div class="t" style="left:144px;top:9px;font-size:11.5px;color:#333;font-weight:normal;">26283898</div>
<div class="t" style="left:301px;top:9px;font-size:11.5px;color:#333;font-weight:normal;">15547748</div>
<div class="t" style="left:437px;top:9px;font-size:11.5px;color:#333;font-weight:normal;">2013-03-01</div>
<div class="t" style="left:687px;top:9px;font-size:11.5px;color:#333;font-weight:normal;">EN_DOC</div>
<div class="t" style="left:825px;top:9px;font-size:11.5px;color:#333;font-weight:normal;">AB44</div>
<div class="t" style="left:945px;top:9px;font-size:11.5px;color:#333;font-weight:normal;">0.2</div>
<div class="t" style="left:1033px;top:9px;font-size:11.5px;color:#333;font-weight:normal;">26283898</div>
<div class="t" style="left:1267px;top:9px;font-size:11.5px;color:#333;font-weight:normal;">12524509</div>
<div class="t" style="left:1409px;top:9px;font-size:11.5px;color:#333;font-weight:normal;">12524509</div>
<div style="position:absolute;left:0px;top:28px;width:1572px;height:27px;background:#fafbfd"></div>
<div style="position:absolute;left:0px;top:55px;width:1572px;height:1px;background:#e3e6ea"></div>
<div class="t" style="left:11px;top:37px;font-size:11.5px;color:#333;font-weight:normal;">30480134</div>
<div class="t" style="left:144px;top:37px;font-size:11.5px;color:#333;font-weight:normal;">28720174</div>
<div class="t" style="left:301px;top:37px;font-size:11.5px;color:#333;font-weight:normal;">11193868</div>
<div class="t" style="left:437px;top:37px;font-size:11.5px;color:#333;font-weight:normal;">2021-02-21</div>
<div class="t" style="left:687px;top:37px;font-size:11.5px;color:#333;font-weight:normal;">EN_DOC</div>
<div class="t" style="left:825px;top:37px;font-size:11.5px;color:#333;font-weight:normal;">4222</div>
<div class="t" style="left:945px;top:37px;font-size:11.5px;color:#333;font-weight:normal;">0.3</div>
<div class="t" style="left:1033px;top:37px;font-size:11.5px;color:#333;font-weight:normal;">28720174</div>
<div class="t" style="left:1267px;top:37px;font-size:11.5px;color:#333;font-weight:normal;">16320652</div>
<div class="t" style="left:1409px;top:37px;font-size:11.5px;color:#333;font-weight:normal;">16320652</div>
<div style="position:absolute;left:0px;top:56px;width:1572px;height:27px;background:#ffffff"></div>
<div style="position:absolute;left:0px;top:83px;width:1572px;height:1px;background:#e3e6ea"></div>
<div class="t" style="left:11px;top:65px;font-size:11.5px;color:#333;font-weight:normal;">32625724</div>
<div class="t" style="left:144px;top:65px;font-size:11.5px;color:#333;font-weight:normal;">21656528</div>
<div class="t" style="left:301px;top:65px;font-size:11.5px;color:#333;font-weight:normal;">17460426</div>
<div class="t" style="left:437px;top:65px;font-size:11.5px;color:#333;font-weight:normal;">2011-02-15</div>
<div class="t" style="left:687px;top:65px;font-size:11.5px;color:#333;font-weight:normal;">EN_DOC</div>
<div class="t" style="left:825px;top:65px;font-size:11.5px;color:#333;font-weight:normal;">Q 90</div>
<div class="t" style="left:945px;top:65px;font-size:11.5px;color:#333;font-weight:normal;">0.3</div>
<div class="t" style="left:1033px;top:65px;font-size:11.5px;color:#333;font-weight:normal;">21656528</div>
<div class="t" style="left:1267px;top:65px;font-size:11.5px;color:#333;font-weight:normal;">10210780</div>
<div class="t" style="left:1409px;top:65px;font-size:11.5px;color:#333;font-weight:normal;">10210780</div>
<div style="position:absolute;left:0px;top:84px;width:1572px;height:27px;background:#fafbfd"></div>
<div style="position:absolute;left:0px;top:111px;width:1572px;height:1px;background:#e3e6ea"></div>
<div class="t" style="left:11px;top:93px;font-size:11.5px;color:#333;font-weight:normal;">34191866</div>
<div class="t" style="left:144px;top:93px;font-size:11.5px;color:#333;font-weight:normal;">27846702</div>
<div class="t" style="left:301px;top:93px;font-size:11.5px;color:#333;font-weight:normal;">11193868</div>
<div class="t" style="left:437px;top:93px;font-size:11.5px;color:#333;font-weight:normal;">2013-06-05</div>
<div class="t" style="left:565px;top:93px;font-size:11.5px;color:#333;font-weight:normal;">2019-01-07</div>
<div class="t" style="left:687px;top:93px;font-size:11.5px;color:#333;font-weight:normal;">EN_DOC</div>
<div class="t" style="left:825px;top:93px;font-size:11.5px;color:#333;font-weight:normal;">9104</div>
<div class="t" style="left:945px;top:93px;font-size:11.5px;color:#333;font-weight:normal;">1</div>
<div class="t" style="left:1033px;top:93px;font-size:11.5px;color:#333;font-weight:normal;">27846702</div>
<div class="t" style="left:1267px;top:93px;font-size:11.5px;color:#333;font-weight:normal;">18658385</div>
<div class="t" style="left:1409px;top:93px;font-size:11.5px;color:#333;font-weight:normal;">18658385</div>
<div style="position:absolute;left:0px;top:112px;width:1572px;height:27px;background:#ffffff"></div>
<div style="position:absolute;left:0px;top:139px;width:1572px;height:1px;background:#e3e6ea"></div>
<div class="t" style="left:11px;top:121px;font-size:11.5px;color:#333;font-weight:normal;">34514932</div>
<div class="t" style="left:144px;top:121px;font-size:11.5px;color:#333;font-weight:normal;">28523093</div>
<div class="t" style="left:301px;top:121px;font-size:11.5px;color:#333;font-weight:normal;">19214260</div>
<div class="t" style="left:437px;top:121px;font-size:11.5px;color:#333;font-weight:normal;">2017-04-13</div>
<div class="t" style="left:565px;top:121px;font-size:11.5px;color:#333;font-weight:normal;">2021-01-27</div>
<div class="t" style="left:687px;top:121px;font-size:11.5px;color:#333;font-weight:normal;">EN_DOC</div>
<div class="t" style="left:825px;top:121px;font-size:11.5px;color:#333;font-weight:normal;">7286</div>
<div class="t" style="left:945px;top:121px;font-size:11.5px;color:#333;font-weight:normal;">0.6</div>
<div class="t" style="left:1033px;top:121px;font-size:11.5px;color:#333;font-weight:normal;">28523093</div>
<div class="t" style="left:1267px;top:121px;font-size:11.5px;color:#333;font-weight:normal;">15847919</div>
<div class="t" style="left:1409px;top:121px;font-size:11.5px;color:#333;font-weight:normal;">15847919</div>
<div style="position:absolute;left:0px;top:140px;width:1572px;height:27px;background:#fafbfd"></div>
<div style="position:absolute;left:0px;top:167px;width:1572px;height:1px;background:#e3e6ea"></div>
<div class="t" style="left:11px;top:149px;font-size:11.5px;color:#333;font-weight:normal;">34985055</div>
<div class="t" style="left:144px;top:149px;font-size:11.5px;color:#333;font-weight:normal;">21103339</div>
<div class="t" style="left:301px;top:149px;font-size:11.5px;color:#333;font-weight:normal;">17460426</div>
<div class="t" style="left:437px;top:149px;font-size:11.5px;color:#333;font-weight:normal;">2014-08-07</div>
<div class="t" style="left:565px;top:149px;font-size:11.5px;color:#333;font-weight:normal;">2020-06-26</div>
<div class="t" style="left:687px;top:149px;font-size:11.5px;color:#333;font-weight:normal;">EN_DOC</div>
<div class="t" style="left:825px;top:149px;font-size:11.5px;color:#333;font-weight:normal;">2785</div>
<div class="t" style="left:945px;top:149px;font-size:11.5px;color:#333;font-weight:normal;">0.7</div>
<div class="t" style="left:1033px;top:149px;font-size:11.5px;color:#333;font-weight:normal;">21103339</div>
<div class="t" style="left:1267px;top:149px;font-size:11.5px;color:#333;font-weight:normal;">14309334</div>
<div class="t" style="left:1409px;top:149px;font-size:11.5px;color:#333;font-weight:normal;">14309334</div>
<div style="position:absolute;left:0px;top:168px;width:1572px;height:27px;background:#ffffff"></div>
<div style="position:absolute;left:0px;top:195px;width:1572px;height:1px;background:#e3e6ea"></div>
<div class="t" style="left:11px;top:177px;font-size:11.5px;color:#333;font-weight:normal;">34991662</div>
<div class="t" style="left:144px;top:177px;font-size:11.5px;color:#333;font-weight:normal;">21303745</div>
<div class="t" style="left:301px;top:177px;font-size:11.5px;color:#333;font-weight:normal;">12092604</div>
<div class="t" style="left:437px;top:177px;font-size:11.5px;color:#333;font-weight:normal;">2018-07-06</div>
<div class="t" style="left:687px;top:177px;font-size:11.5px;color:#333;font-weight:normal;">EN_DOC</div>
<div class="t" style="left:825px;top:177px;font-size:11.5px;color:#333;font-weight:normal;">2556</div>
<div class="t" style="left:945px;top:177px;font-size:11.5px;color:#333;font-weight:normal;">0.9</div>
<div class="t" style="left:1033px;top:177px;font-size:11.5px;color:#333;font-weight:normal;">21303745</div>
<div class="t" style="left:1267px;top:177px;font-size:11.5px;color:#333;font-weight:normal;">15299093</div>
<div class="t" style="left:1409px;top:177px;font-size:11.5px;color:#333;font-weight:normal;">15299093</div>
<div style="position:absolute;left:0px;top:196px;width:1572px;height:27px;background:#fafbfd"></div>
<div style="position:absolute;left:0px;top:223px;width:1572px;height:1px;background:#e3e6ea"></div>
<div class="t" style="left:11px;top:205px;font-size:11.5px;color:#333;font-weight:normal;">35070279</div>
<div class="t" style="left:144px;top:205px;font-size:11.5px;color:#333;font-weight:normal;">27834480</div>
<div class="t" style="left:301px;top:205px;font-size:11.5px;color:#333;font-weight:normal;">12092604</div>
<div class="t" style="left:437px;top:205px;font-size:11.5px;color:#333;font-weight:normal;">2018-08-02</div>
<div class="t" style="left:687px;top:205px;font-size:11.5px;color:#333;font-weight:normal;">EN_DOC</div>
<div class="t" style="left:825px;top:205px;font-size:11.5px;color:#333;font-weight:normal;">2588</div>
<div class="t" style="left:945px;top:205px;font-size:11.5px;color:#333;font-weight:normal;">0.2</div>
<div class="t" style="left:1033px;top:205px;font-size:11.5px;color:#333;font-weight:normal;">27834480</div>
<div class="t" style="left:1267px;top:205px;font-size:11.5px;color:#333;font-weight:normal;">11697466</div>
<div class="t" style="left:1409px;top:205px;font-size:11.5px;color:#333;font-weight:normal;">11697466</div>
<div style="position:absolute;left:0px;top:224px;width:1572px;height:27px;background:#ffffff"></div>
<div style="position:absolute;left:0px;top:251px;width:1572px;height:1px;background:#e3e6ea"></div>
<div class="t" style="left:11px;top:233px;font-size:11.5px;color:#333;font-weight:normal;">35133398</div>
<div class="t" style="left:144px;top:233px;font-size:11.5px;color:#333;font-weight:normal;">21651749</div>
<div class="t" style="left:301px;top:233px;font-size:11.5px;color:#333;font-weight:normal;">14847356</div>
<div class="t" style="left:437px;top:233px;font-size:11.5px;color:#333;font-weight:normal;">2015-02-24</div>
<div class="t" style="left:687px;top:233px;font-size:11.5px;color:#333;font-weight:normal;">EN_DOC</div>
<div class="t" style="left:825px;top:233px;font-size:11.5px;color:#333;font-weight:normal;">1548</div>
<div class="t" style="left:945px;top:233px;font-size:11.5px;color:#333;font-weight:normal;">0.1</div>
<div class="t" style="left:1033px;top:233px;font-size:11.5px;color:#333;font-weight:normal;">21651749</div>
<div class="t" style="left:1267px;top:233px;font-size:11.5px;color:#333;font-weight:normal;">16832932</div>
<div class="t" style="left:1409px;top:233px;font-size:11.5px;color:#333;font-weight:normal;">16832932</div>
<div style="position:absolute;left:0px;top:252px;width:1572px;height:27px;background:#fafbfd"></div>
<div style="position:absolute;left:0px;top:279px;width:1572px;height:1px;background:#e3e6ea"></div>
<div class="t" style="left:11px;top:261px;font-size:11.5px;color:#333;font-weight:normal;">35773806</div>
<div class="t" style="left:144px;top:261px;font-size:11.5px;color:#333;font-weight:normal;">20721087</div>
<div class="t" style="left:301px;top:261px;font-size:11.5px;color:#333;font-weight:normal;">11193868</div>
<div class="t" style="left:437px;top:261px;font-size:11.5px;color:#333;font-weight:normal;">2010-05-01</div>
<div class="t" style="left:687px;top:261px;font-size:11.5px;color:#333;font-weight:normal;">EN_DOC</div>
<div class="t" style="left:825px;top:261px;font-size:11.5px;color:#333;font-weight:normal;">3371</div>
<div class="t" style="left:945px;top:261px;font-size:11.5px;color:#333;font-weight:normal;">0.8</div>
<div class="t" style="left:1033px;top:261px;font-size:11.5px;color:#333;font-weight:normal;">20721087</div>
<div class="t" style="left:1267px;top:261px;font-size:11.5px;color:#333;font-weight:normal;">13890261</div>
<div class="t" style="left:1409px;top:261px;font-size:11.5px;color:#333;font-weight:normal;">13890261</div>
<div style="position:absolute;left:0px;top:280px;width:1572px;height:27px;background:#ffffff"></div>
<div style="position:absolute;left:0px;top:307px;width:1572px;height:1px;background:#e3e6ea"></div>
<div class="t" style="left:11px;top:289px;font-size:11.5px;color:#333;font-weight:normal;">37410356</div>
<div class="t" style="left:144px;top:289px;font-size:11.5px;color:#333;font-weight:normal;">27719853</div>
<div class="t" style="left:301px;top:289px;font-size:11.5px;color:#333;font-weight:normal;">15438178</div>
<div class="t" style="left:437px;top:289px;font-size:11.5px;color:#333;font-weight:normal;">2020-10-22</div>
<div class="t" style="left:687px;top:289px;font-size:11.5px;color:#333;font-weight:normal;">EN_DOC</div>
<div class="t" style="left:825px;top:289px;font-size:11.5px;color:#333;font-weight:normal;">7248</div>
<div class="t" style="left:945px;top:289px;font-size:11.5px;color:#333;font-weight:normal;">0.2</div>
<div class="t" style="left:1033px;top:289px;font-size:11.5px;color:#333;font-weight:normal;">27719853</div>
<div class="t" style="left:1267px;top:289px;font-size:11.5px;color:#333;font-weight:normal;">16534207</div>
<div class="t" style="left:1409px;top:289px;font-size:11.5px;color:#333;font-weight:normal;">16534207</div>
<div style="position:absolute;left:0px;top:308px;width:1572px;height:27px;background:#fafbfd"></div>
<div style="position:absolute;left:0px;top:335px;width:1572px;height:1px;background:#e3e6ea"></div>
<div class="t" style="left:11px;top:317px;font-size:11.5px;color:#333;font-weight:normal;">37497546</div>
<div class="t" style="left:144px;top:317px;font-size:11.5px;color:#333;font-weight:normal;">25725354</div>
<div class="t" style="left:301px;top:317px;font-size:11.5px;color:#333;font-weight:normal;">16875678</div>
<div class="t" style="left:437px;top:317px;font-size:11.5px;color:#333;font-weight:normal;">2015-08-07</div>
<div class="t" style="left:687px;top:317px;font-size:11.5px;color:#333;font-weight:normal;">EN_DOC</div>
<div class="t" style="left:825px;top:317px;font-size:11.5px;color:#333;font-weight:normal;">8150</div>
<div class="t" style="left:945px;top:317px;font-size:11.5px;color:#333;font-weight:normal;">1</div>
<div class="t" style="left:1033px;top:317px;font-size:11.5px;color:#333;font-weight:normal;">25725354</div>
<div class="t" style="left:1267px;top:317px;font-size:11.5px;color:#333;font-weight:normal;">12470158</div>
<div class="t" style="left:1409px;top:317px;font-size:11.5px;color:#333;font-weight:normal;">12470158</div>
<div style="position:absolute;left:0px;top:336px;width:1572px;height:27px;background:#ffffff"></div>
<div style="position:absolute;left:0px;top:363px;width:1572px;height:1px;background:#e3e6ea"></div>
<div class="t" style="left:11px;top:345px;font-size:11.5px;color:#333;font-weight:normal;">37561581</div>
<div class="t" style="left:144px;top:345px;font-size:11.5px;color:#333;font-weight:normal;">28378711</div>
<div class="t" style="left:301px;top:345px;font-size:11.5px;color:#333;font-weight:normal;">12092604</div>
<div class="t" style="left:437px;top:345px;font-size:11.5px;color:#333;font-weight:normal;">2020-09-16</div>
<div class="t" style="left:687px;top:345px;font-size:11.5px;color:#333;font-weight:normal;">EN_DOC</div>
<div class="t" style="left:825px;top:345px;font-size:11.5px;color:#333;font-weight:normal;">7287</div>
<div class="t" style="left:945px;top:345px;font-size:11.5px;color:#333;font-weight:normal;">0.1</div>
<div class="t" style="left:1033px;top:345px;font-size:11.5px;color:#333;font-weight:normal;">28378711</div>
<div class="t" style="left:1267px;top:345px;font-size:11.5px;color:#333;font-weight:normal;">14192104</div>
<div class="t" style="left:1409px;top:345px;font-size:11.5px;color:#333;font-weight:normal;">14192104</div>
<div style="position:absolute;left:0px;top:364px;width:1572px;height:27px;background:#fafbfd"></div>
<div style="position:absolute;left:0px;top:391px;width:1572px;height:1px;background:#e3e6ea"></div>
<div class="t" style="left:11px;top:373px;font-size:11.5px;color:#333;font-weight:normal;">37992140</div>
<div class="t" style="left:144px;top:373px;font-size:11.5px;color:#333;font-weight:normal;">25513122</div>
<div class="t" style="left:301px;top:373px;font-size:11.5px;color:#333;font-weight:normal;">16875678</div>
<div class="t" style="left:437px;top:373px;font-size:11.5px;color:#333;font-weight:normal;">2014-02-21</div>
<div class="t" style="left:687px;top:373px;font-size:11.5px;color:#333;font-weight:normal;">EN_DOC</div>
<div class="t" style="left:825px;top:373px;font-size:11.5px;color:#333;font-weight:normal;">2416</div>
<div class="t" style="left:945px;top:373px;font-size:11.5px;color:#333;font-weight:normal;">0.2</div>
<div class="t" style="left:1033px;top:373px;font-size:11.5px;color:#333;font-weight:normal;">25513122</div>
<div class="t" style="left:1267px;top:373px;font-size:11.5px;color:#333;font-weight:normal;">11625253</div>
<div class="t" style="left:1409px;top:373px;font-size:11.5px;color:#333;font-weight:normal;">11625253</div>
</div>
<div style="position:absolute;left:321px;top:658px;width:1571px;height:1px;background:#dee1e5"></div>
<div style="position:absolute;left:1892px;top:658px;width:16px;height:383px;background:#f1f1f1"></div>
<div style="position:absolute;left:1894px;top:674px;width:13px;height:280px;background:#c1c1c1"></div>
<svg style="position:absolute;left:1896px;top:665px" width="8" height="5" viewBox="0 0 8 5"><path d="M0 5 L4 0 L8 5Z" fill="#a3a3a3"/></svg>
<svg style="position:absolute;left:1896px;top:1028px" width="8" height="5" viewBox="0 0 8 5"><path d="M0 0 L4 5 L8 0Z" fill="#505050"/></svg>
<div style="position:absolute;left:321px;top:1041px;width:1571px;height:15px;background:#f1f1f1"></div>
<div style="position:absolute;left:338px;top:1042px;width:420px;height:13px;background:#c1c1c1"></div>
<svg style="position:absolute;left:327px;top:1044px" width="5" height="8" viewBox="0 0 5 8"><path d="M5 0 L0 4 L5 8Z" fill="#a3a3a3"/></svg>
<svg style="position:absolute;left:1881px;top:1044px" width="5" height="8" viewBox="0 0 5 8"><path d="M0 0 L5 4 L0 8Z" fill="#505050"/></svg>
</div>
<div style="position:absolute;left:0;top:0;width:1920px;height:1131px;z-index:30;pointer-events:none">
<div style="position:absolute;left:1px;top:1px;width:1px;height:1128px;background:#d0d0d0"></div>
<div style="position:absolute;left:1px;top:1px;width:1918px;height:1px;background:#d0d0d0"></div>
<div style="position:absolute;left:1918px;top:1px;width:1px;height:1128px;background:#d0d0d0"></div>
<div style="position:absolute;left:1px;top:1128px;width:1918px;height:1px;background:#d0d0d0"></div>
<div style="position:absolute;left:0px;top:0px;width:1920px;height:1px;background:#000"></div>
<div style="position:absolute;left:0px;top:0px;width:1px;height:1131px;background:#000"></div>
<div style="position:absolute;left:1919px;top:0px;width:1px;height:1131px;background:#000"></div>
<div style="position:absolute;left:0px;top:1129px;width:1920px;height:2px;background:#000"></div>
</div>
</body></html>
